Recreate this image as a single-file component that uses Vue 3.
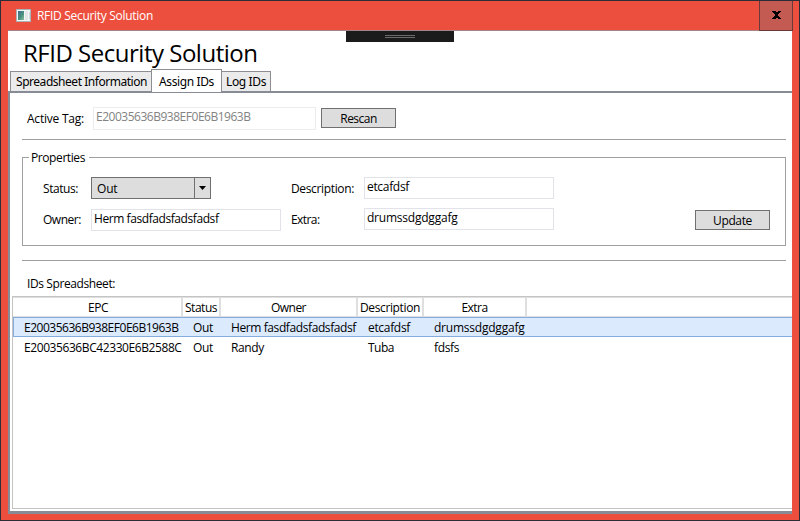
<script setup>
import { ref } from 'vue'

// Tracks a label so that its advance equals the given width in pixels.
const vFit = {
  mounted(el, { value }) {
    const width = el.getBoundingClientRect().width
    el.style.letterSpacing = (value - width) / el.textContent.length + 'px'
  },
}

const tabs = [
  { label: 'Spreadsheet Information', width: 131, cls: 'tab-sheet' },
  { label: 'Assign IDs', width: 55, cls: 'tab-assign' },
  { label: 'Log IDs', width: 40, cls: 'tab-log' },
]
const activeTab = ref(1)

const columns = [
  { label: 'EPC', width: 20 },
  { label: 'Status', width: 32 },
  { label: 'Owner', width: 35 },
  { label: 'Description', width: 60 },
  { label: 'Extra', width: 26 },
]
const rows = [
  [
    { text: 'E20035636B938EF0E6B1963B', width: 154.5 },
    { text: 'Out', width: 20 },
    { text: 'Herm fasdfadsfadsfadsf', width: 125 },
    { text: 'etcafdsf', width: 42 },
    { text: 'drumssdgdggafg', width: 90.5 },
  ],
  [
    { text: 'E20035636BC42330E6B2588C', width: 157.5 },
    { text: 'Out', width: 20 },
    { text: 'Randy', width: 33 },
    { text: 'Tuba', width: 26 },
    { text: 'fdsfs', width: 25 },
  ],
]
const selected = ref(0)
</script>

<template>
  <div class="window">
    <header class="titlebar">
      <svg class="app-icon" width="15" height="13" viewBox="0 0 15 13">
        <defs>
          <linearGradient id="pane" x1="0" y1="0" x2="1" y2="1">
            <stop offset="0" stop-color="#3f6b94" />
            <stop offset="0.6" stop-color="#4d947f" />
            <stop offset="1" stop-color="#8fc0a0" />
          </linearGradient>
        </defs>
        <rect width="15" height="13" fill="#a9b4b8" />
        <rect x="1" y="1" width="13" height="11" fill="#f4f6f6" />
        <rect x="2" y="2" width="6" height="9" fill="url(#pane)" />
        <rect x="9" y="2" width="3" height="9" fill="#e2e6e8" />
        <rect x="13" y="3" width="1" height="7" fill="#d3d9dc" />
      </svg>
      <span class="caption"><span v-fit="116">RFID Security Solution</span></span>
      <button class="close" aria-label="Close">
        <svg width="10" height="8" viewBox="0 0 10 8" shape-rendering="crispEdges">
          <path d="M0 0h4v1h2v-1h3v1h-1v1h-1v1h-1v2h1v1h1v1h1v1h-3v-1h-2v1h-4v-1h1v-1h1v-1h1v-2h-1v-1h-1v-1h-1z" />
        </svg>
      </button>
    </header>

    <main class="client">
      <div class="debug-bar"><i></i><i></i></div>
      <h1 class="heading"><span v-fit="234.5">RFID Security Solution</span></h1>

      <nav class="tabs">
        <button
          v-for="(tab, i) in tabs"
          :key="tab.label"
          class="tab"
          :class="[tab.cls, { active: i === activeTab }]"
          @click="activeTab = i"
        ><span v-fit="tab.width">{{ tab.label }}</span></button>
      </nav>

      <section class="pane">
        <div class="scan-row">
          <label class="scan-label"><span v-fit="57">Active Tag:</span></label>
          <div class="box disabled"><span v-fit="154.5">E20035636B938EF0E6B1963B</span></div>
          <button class="btn"><span v-fit="36.5">Rescan</span></button>
        </div>

        <fieldset class="group">
          <legend><span v-fit="54">Properties</span></legend>
          <div class="col col-left">
            <div class="field">
              <label><span v-fit="35">Status:</span></label>
              <div class="combo">
                <span v-fit="20.5">Out</span>
                <b><svg width="7" height="4" viewBox="0 0 7 4"><path d="M0 0h7L3.5 4z" /></svg></b>
              </div>
            </div>
            <div class="field owner">
              <label><span v-fit="38">Owner:</span></label>
              <div class="box"><span v-fit="124.5">Herm fasdfadsfadsfadsf</span></div>
            </div>
          </div>
          <div class="col col-right">
            <div class="field">
              <label><span v-fit="63">Description:</span></label>
              <div class="box"><span v-fit="42">etcafdsf</span></div>
            </div>
            <div class="field">
              <label><span v-fit="28.5">Extra:</span></label>
              <div class="box"><span v-fit="90.5">drumssdgdggafg</span></div>
            </div>
          </div>
          <button class="btn update"><span v-fit="39">Update</span></button>
        </fieldset>

        <div class="list-title"><span v-fit="88">IDs Spreadsheet:</span></div>

        <div class="list">
          <div class="line head">
            <div v-for="c in columns" :key="c.label" class="cell">
              <span v-fit="c.width">{{ c.label }}</span>
            </div>
          </div>
          <div
            v-for="(row, i) in rows"
            :key="i"
            class="line row"
            :class="{ selected: i === selected }"
            @click="selected = i"
          >
            <div v-for="(c, j) in row" :key="j" class="cell">
              <span v-fit="c.width">{{ c.text }}</span>
            </div>
          </div>
        </div>
      </section>
    </main>
  </div>
</template>

<style>
body {
  margin: 0;
}
</style>

<style scoped>
* {
  box-sizing: border-box;
}
span {
  display: inline-block;
  white-space: pre;
}
button {
  font: inherit;
  color: inherit;
  padding: 0;
  margin: 0;
  border-radius: 0;
}
.window {
  width: 800px;
  height: 521px;
  border: 1px solid #2b2e38;
  background: #ed4f3e;
  padding: 0 7px 6px;
  display: flex;
  flex-direction: column;
  overflow: hidden;
  font: 12px/16px 'Open Sans', 'Noto Sans', sans-serif;
  color: #000;
}
.titlebar {
  height: 29px;
  flex: none;
  display: flex;
  align-items: flex-start;
  padding-left: 8px;
}
.app-icon {
  margin-top: 8px;
}
.caption {
  margin: 7px auto 0 6px;
  color: #fff;
}
.close {
  width: 34px;
  height: 30px;
  margin-right: -1px;
  flex: none;
  border: 1px solid #693a39;
  border-top: 0;
  background: #c45b52;
  position: relative;
  z-index: 1;
  display: flex;
  align-items: flex-start;
  padding: 10px 0 0 12px;
}
.client {
  position: relative;
  flex: 1;
  min-height: 0;
  border-top: 1px solid #a58386;
  background: #fff;
  display: flex;
  flex-direction: column;
}
.debug-bar {
  position: absolute;
  left: 338px;
  top: 0;
  width: 108px;
  height: 11px;
  padding: 4px 39px;
  background: #1b1b1b;
  display: flex;
  flex-direction: column;
  gap: 1px;
}
.debug-bar i {
  height: 1px;
  background: #6b6b6b;
}
.heading {
  margin: 0;
  height: 38px;
  padding: 6px 0 0 15px;
  font-size: 24px;
  font-weight: 400;
  line-height: 32px;
}
.tabs {
  height: 22px;
  flex: none;
  padding-left: 2px;
  display: flex;
  align-items: flex-end;
  font-family: 'Noto Sans', 'Open Sans', sans-serif;
}
.tab {
  height: 20px;
  border: 1px solid #8c8e94;
  border-bottom: 0;
  background: #ebebeb;
  text-align: left;
  padding: 1px 0 0 5px;
}
.tab-sheet {
  width: 142px;
}
.tab-assign {
  width: 71px;
}
.tab-log {
  width: 50px;
  padding-left: 4px;
}
.tab.active {
  height: 23px;
  margin: 0 -1px -1px;
  padding: 3px 0 2px 7px;
  background: #fff;
  position: relative;
}
.pane {
  flex: 1;
  min-height: 0;
  border: solid #868b95;
  border-width: 2px 0 3px 2px;
  padding: 14px 0 2px 2px;
  display: flex;
  flex-direction: column;
}
.scan-row {
  height: 33px;
  margin: 0 6px 0 10px;
  border-bottom: 1px solid #a0a0a0;
  flex: none;
  display: flex;
  align-items: flex-start;
}
.scan-label {
  width: 71px;
  padding: 4px 0 0 5px;
}
.box {
  width: 190px;
  height: 22px;
  border: 1px solid #e2e3ea;
  padding: 1px 0 0 2px;
  background: #fff;
}
.box.disabled {
  width: 223px;
  height: 23px;
  margin-right: 5px;
  border-color: #ececee;
  color: #838383;
}
.btn {
  width: 75px;
  height: 20px;
  border: 1px solid #707070;
  background: #ddd;
  text-align: center;
  line-height: 16px;
  padding-top: 2px;
}
.scan-row .btn {
  margin-top: 1px;
}
.group {
  position: relative;
  height: 89px;
  flex: none;
  margin: 17px 6px 0 10px;
  padding: 19px 15px 0 20px;
  border: 1px solid #a0a0a0;
  min-width: 0;
  display: flex;
}
legend {
  position: absolute;
  top: -9px;
  left: 6px;
  height: 18px;
  width: 60px;
  padding: 1px 2px 0;
  background: #fff;
}
.col {
  display: flex;
  flex-direction: column;
  gap: 9px;
}
.col-left {
  width: 248px;
}
.field {
  display: flex;
}
.col-left label {
  width: 48px;
}
.col-right label {
  width: 73px;
}
.field label {
  padding-top: 4px;
}
.owner {
  margin-top: 1px;
}
.owner label {
  padding-top: 3px;
}
.combo {
  width: 120px;
  height: 22px;
  border: 1px solid #707070;
  background: #ddd;
  padding: 3px 0 0 5px;
  display: flex;
  justify-content: space-between;
}
.combo b {
  width: 16px;
  height: 20px;
  margin-top: -3px;
  border-left: 1px solid #707070;
  display: flex;
  justify-content: center;
  align-items: center;
  padding-bottom: 1px;
}
.update {
  margin: 33px 0 0 auto;
}
.list-title {
  height: 50px;
  flex: none;
  margin: 0 6px 0 10px;
  padding: 30px 0 0 5px;
  background: linear-gradient(#a0a0a0, #a0a0a0) 0 14px / 100% 1px no-repeat;
}
.list {
  flex: 1;
  border: solid #c4c4c4;
  border-width: 1px 0 1px 1px;
}
.line {
  display: grid;
  grid-template-columns: 170px 38px 137px 66px 103px 1fr;
}
.head {
  height: 20px;
  border: solid #dfdfdf;
  border-width: 1px 0;
}
.head .cell {
  height: 18px;
  border-right: 2px solid #dfdfdf;
  padding-top: 2px;
  text-align: center;
}
.head .cell:first-child {
  padding-left: 2px;
}
.row {
  height: 20px;
  border: 1px solid transparent;
  border-right: 0;
}
.row.selected {
  background: #dbeafd;
  border-color: #84acdd;
}
.row .cell {
  padding: 2px 0 0 9px;
}
.row .cell:first-child {
  padding-left: 10px;
}
</style>
